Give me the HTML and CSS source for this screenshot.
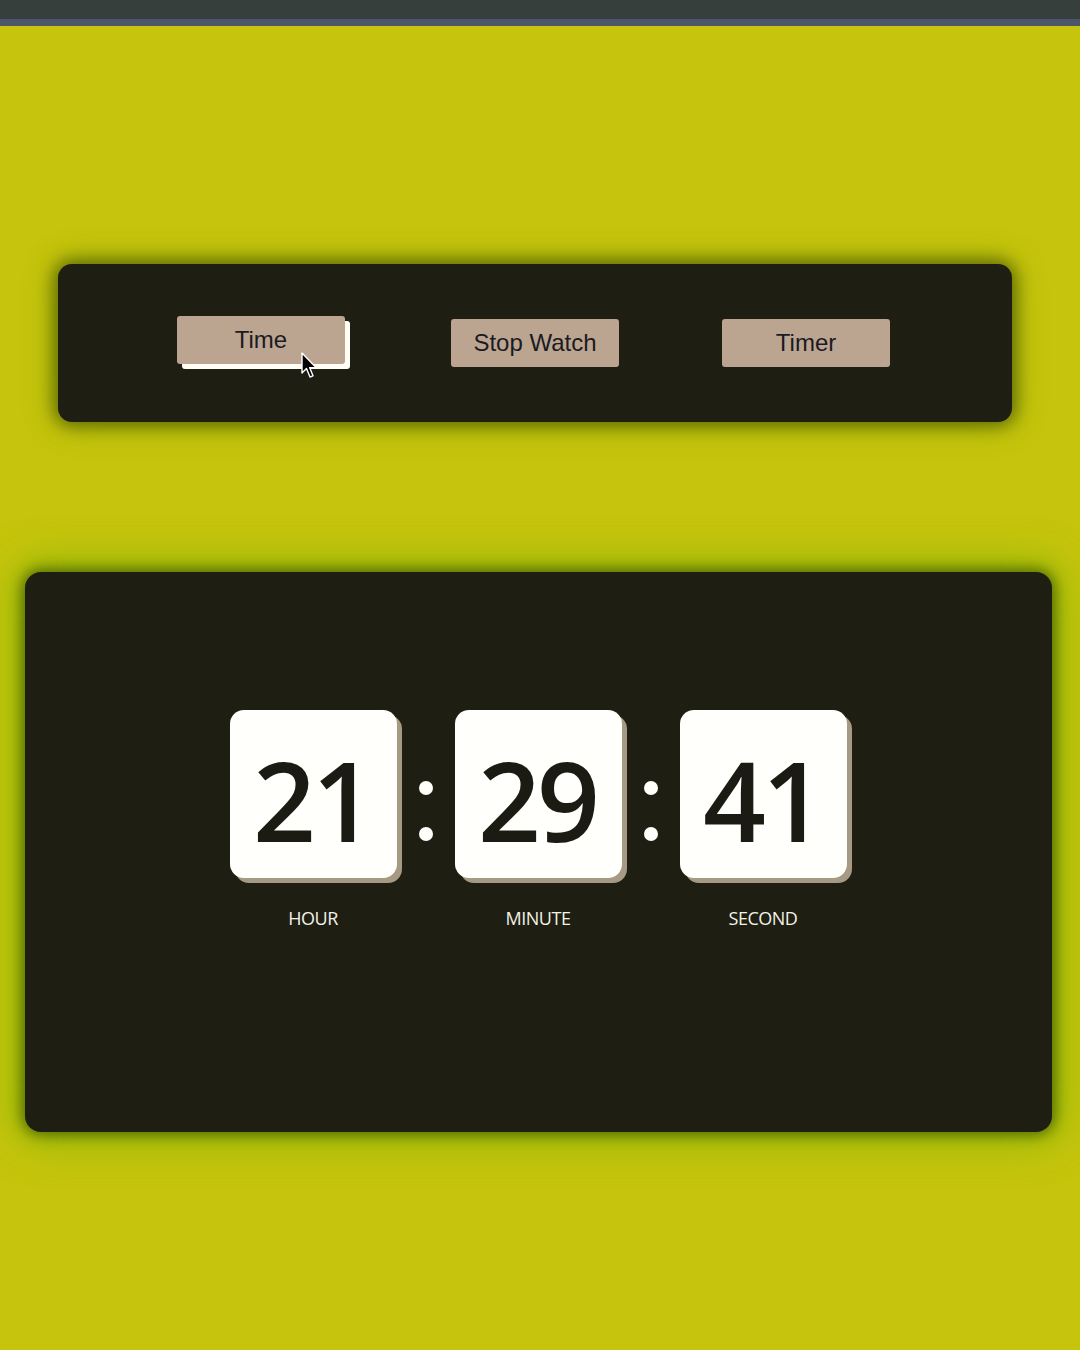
FILE: index.html
```html
<!DOCTYPE html>
<html lang="en">
<head>
<meta charset="utf-8">
<title>Clock</title>
<link rel="stylesheet" href="styles.css">
</head>
<body>
<div class="topbar"><div class="topbar-strip"></div></div>
<main class="page">
  <section class="menu">
    <button class="btn btn-hover">Time
      <svg class="cursor" width="18" height="28" viewBox="0 0 18 28"><path d="M1 1 L1 21 L5.5 16.5 L9 25 L12 23.8 L8.6 15.6 L15 15.6 Z" fill="#000" stroke="#fff" stroke-width="1.4" stroke-linejoin="round"/></svg>
    </button>
    <button class="btn">Stop Watch</button>
    <button class="btn">Timer</button>
  </section>
  <section class="clock-panel">
    <div class="clock">
      <div class="unit">
        <div class="card">21</div>
        <div class="label">HOUR</div>
      </div>
      <div class="colon"><span class="dot"></span><span class="dot"></span></div>
      <div class="unit">
        <div class="card">29</div>
        <div class="label">MINUTE</div>
      </div>
      <div class="colon"><span class="dot"></span><span class="dot"></span></div>
      <div class="unit">
        <div class="card">41</div>
        <div class="label">SECOND</div>
      </div>
    </div>
  </section>
</main>
</body>
</html>
```
FILE: styles.css
```css
html, body {
  margin: 0;
  padding: 0;
}
body {
  background: #c6c40c;
  width: 1080px;
  height: 1350px;
  overflow: hidden;
  font-family: "Open Sans", "Liberation Sans", sans-serif;
}
.topbar {
  height: 26px;
  background: #373f3c;
  display: flex;
  flex-direction: column;
  justify-content: flex-end;
}
.topbar-strip {
  height: 7px;
  background: #4b566a;
}
.page {
  padding-top: 238px;
  display: flex;
  flex-direction: column;
}
.menu {
  margin: 0 68px 0 58px;
  height: 158px;
  box-sizing: border-box;
  background: #1e1e13;
  border-radius: 14px;
  box-shadow: 0 0 18px 4px rgba(20, 30, 0, 0.55), 0 0 34px rgba(110, 170, 0, 0.45);
  display: flex;
  align-items: center;
  justify-content: flex-start;
  padding-left: 122px;
  gap: 103px;
}
.btn {
  position: relative;
  width: 168px;
  height: 48px;
  border: none;
  border-radius: 3px;
  background: #bba590;
  color: #1c1a22;
  font-family: "Liberation Sans", Arial, sans-serif;
  font-size: 24px;
  padding: 0;
}
.btn-hover {
  transform: translate(-3px, -3px);
  box-shadow: 5px 5px 0 #fffdf4;
}
.cursor {
  position: absolute;
  left: 124px;
  top: 36px;
}
.clock-panel {
  margin: 150px 28px 0 25px;
  height: 560px;
  box-sizing: border-box;
  background: #1e1e13;
  border-radius: 16px;
  box-shadow: 0 0 14px 3px rgba(30, 50, 0, 0.6), 0 0 40px 8px rgba(100, 175, 0, 0.6);
  padding-top: 138px;
}
.clock {
  display: flex;
  justify-content: center;
  align-items: flex-start;
  padding-right: 1px;
}
.unit {
  display: flex;
  flex-direction: column;
  align-items: center;
  width: 167px;
}
.card {
  width: 167px;
  height: 168px;
  box-sizing: border-box;
  padding-top: 10px;
  background: #fffffb;
  border-radius: 14px;
  box-shadow: 5px 5px 0 #a79a84;
  color: #1b1b14;
  font-family: "Open Sans", "Noto Sans", sans-serif;
  font-weight: 600;
  font-size: 110px;
  letter-spacing: -4px;
  text-indent: -2px;
  line-height: 158px;
  text-align: center;
}
.label {
  margin-top: 28px;
  font-size: 18px;
  line-height: 24px;
  color: #f2f2e6;
  letter-spacing: -0.5px;
}
.colon {
  width: 58px;
  height: 168px;
  display: flex;
  flex-direction: column;
  align-items: center;
  justify-content: flex-start;
  gap: 32px;
  padding-top: 71px;
  box-sizing: border-box;
}
.dot {
  width: 14px;
  height: 14px;
  border-radius: 50%;
  background: #fffffb;
}
```
